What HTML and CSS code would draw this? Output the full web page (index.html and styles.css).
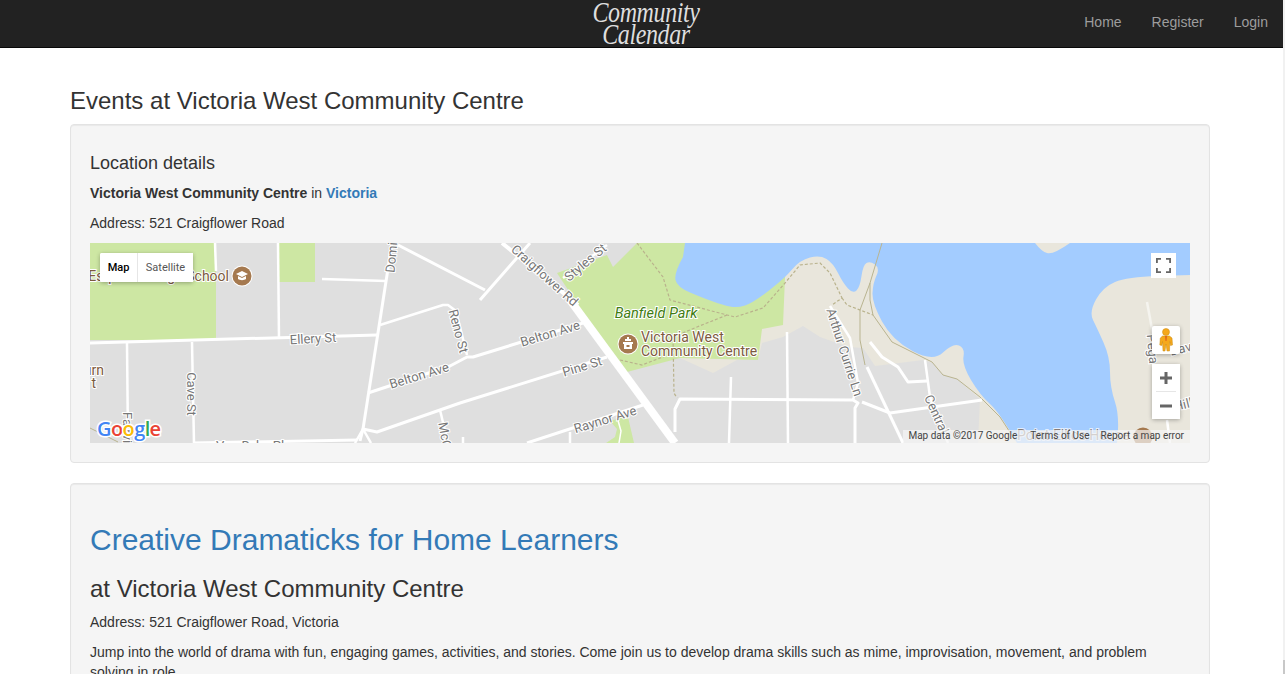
FILE: index.html
```html
<!DOCTYPE html>
<html lang="en">
<head>
  <meta charset="UTF-8" />
  <title>Events at Victoria West Community Centre</title>
  <link rel="stylesheet" href="styles.css">
</head>
<body>
  <div class="page">
    <nav class="navbar">
      <a class="brand" href="#"><span>Community</span><span>Calendar</span></a>
      <ul class="nav-links">
        <li><a href="#">Home</a></li>
        <li><a href="#">Register</a></li>
        <li><a href="#">Login</a></li>
      </ul>
    </nav>

    <main class="content">
      <h3 class="page-title">Events at Victoria West Community Centre</h3>

      <section class="well">
        <h4 class="well-title">Location details</h4>
        <p><strong>Victoria West Community Centre</strong> in <a class="strong-link" href="#">Victoria</a></p>
        <p>Address: 521 Craigflower Road</p>

        <div class="map">
          <svg class="map-canvas" viewBox="0 0 1100 200" width="1100" height="200">
            <rect width="1100" height="200" fill="#dfdfdf" />
            <!-- shore -->
            <polygon fill="#e9e6dc" points="590,115 623,130 647,117 668,117 672,100 693,94 713,83 730,94 758,104 773,105 785,123 833,117 843,120 853,132 867,136 890,156 888,200 1100,200 1100,0 595,0" />
            <!-- parks -->
            <rect width="126" height="97" fill="#cde7a3" />
            <rect x="189" width="36" height="39" fill="#cde7a3" />
            <polygon fill="#cde7a3" points="467,30 517,12 523,24 547,0 600,0 700,0 695,35 693,82 672,86 668,117 590,115 537,129 488,62" />
            <polygon fill="#cde7a3" points="520,178 530,175 538,174 544,200 516,200 525,194 527,186" />
            <!-- water -->
            <path fill="#a3ccff" d="M595 0L593 14Q584 30 585.500 37Q587 44 600 49.500Q613 55 623 58.500Q633 62 640 63.500Q647 65 655 62.500Q663 60 679 47.500Q695 35 702.500 26Q710 17 720 14.500Q730 12 736.500 16Q743 20 748 30Q753 40 758 45.500Q763 51 766.500 47.500Q770 44 771.500 33Q773 22 776.500 20Q780 18 785 21.500Q790 25 786.500 32.500Q783 40 782.500 50Q782 60 792 78.500Q802 97 822.500 108Q843 119 853 109.500Q863 100 869 102.500Q875 105 873.500 113.500Q872 122 881 137Q890 152 900 161Q910 170 927 200L1027 200Q1030 174 1025 159Q1020 144 1020 129Q1020 114 1013.500 99.500Q1007 85 1003 77Q999 69 1006 56.500Q1013 44 1025 39Q1037 34 1068 33L1100 32L1100 0L980 0Q963 12 957 10Q952 9 945 0Z" />

            <!-- trails and rail -->
            <g fill="none" stroke="#b9b28c" stroke-width="1.200" stroke-dasharray="3 2">
              <polyline points="547,0 573,34 580,57 637,72 645,74 673,65 695,40 710,22 730,20 740,30 752,55 742,62" />
              <polyline points="752,55 757,62 783,72" />
              <polyline points="637,72 607,84 583,94 584,150 587,155" />
              <polyline points="530,117 552,122 583,110" />
            </g>
            <g fill="none" stroke="#b9b490" stroke-width="1">
              <polyline points="792,0 780,40 770,67 770,97 775,122" />
              <polyline points="780,40 780,57 783,72 802,99 842,119 853,132 867,136 890,154 910,174 925,197" />
              <polyline points="0,185 14,192 28,199" />
            </g>

            <!-- roads -->
            <g fill="none" stroke="#fff" stroke-width="2.500" stroke-linejoin="round">
              <line x1="0" y1="100" x2="287" y2="92" stroke-width="3" />
              <line x1="125" y1="0" x2="126" y2="28" />
              <line x1="188" y1="0" x2="189" y2="96" />
              <line x1="37" y1="100" x2="38" y2="200" />
              <line x1="102" y1="99" x2="104" y2="200" />
              <line x1="302" y1="0" x2="273" y2="186" stroke-width="3" />
              <line x1="232" y1="36" x2="296" y2="38" />
              <polyline points="290,82 353,62 358,62 366,68 377,112" />
              <polyline points="278,150 360,123 377,114 383,114 493,80" stroke-width="3" />
              <polyline points="270,198 273,186 287,189 370,160 517,114" stroke-width="3" />
              <line x1="103" y1="200" x2="267" y2="197" stroke-width="3" />
              <polyline points="265,200 273,186 281,200" />
              <line x1="350" y1="167" x2="358" y2="200" />
              <line x1="308" y1="2" x2="395" y2="47" stroke-width="3" />
              <line x1="390" y1="57" x2="440" y2="0" stroke-width="3" />
              <line x1="412" y1="0" x2="488" y2="62" stroke-width="4" />
              <line x1="480" y1="57" x2="585" y2="200" stroke-width="8" />
              <line x1="473" y1="35" x2="517" y2="2" />
              <line x1="437" y1="200" x2="553" y2="162" stroke-width="3" />
              <line x1="480" y1="189" x2="480" y2="200" />
              <line x1="373" y1="194" x2="373" y2="200" />
              <polyline points="527,174 531,188 529,200" stroke-width="1.500" />
              <polyline points="585,189 585,166 590,156 763,157 768,160 765,165 765,200" stroke-width="3" />
              <polyline points="772,159 800,170 892,157" stroke-width="3" />
              <polyline points="740,63 760,95 768,140 763,157" />
              <line x1="777" y1="124" x2="813" y2="200" stroke-width="3" />
              <polyline points="780,99 792,114 808,124 818,139 837,138" stroke-width="3" />
              <polyline points="835,117 840,154 858,200" />
              <line x1="697" y1="89" x2="698" y2="200" />
              <line x1="641" y1="134" x2="639" y2="200" />
              <line x1="1057" y1="59" x2="1064" y2="97" stroke="#f5f4ef" />
              <line x1="1077" y1="177" x2="1080" y2="200" />
            </g>

            <!-- street labels -->
            <g class="map-label">
              <text x="223" y="100" transform="rotate(-3 223 95)">Ellery St</text>
              <text x="102" y="156" transform="rotate(90 102 151)">Cave St</text>
              <text x="302" y="7" transform="rotate(-85 302 2)">Dominion</text>
              <text x="369" y="93" transform="rotate(75 369 88)">Reno St</text>
              <text x="329" y="137" transform="rotate(-17 329 132)">Belton Ave</text>
              <text x="460" y="95" transform="rotate(-17 460 90)">Belton Ave</text>
              <text x="492" y="128" transform="rotate(-17 492 123)">Pine St</text>
              <text x="515" y="181" transform="rotate(-17 515 176)">Raynor Ave</text>
              <text x="455" y="37" transform="rotate(42 455 32)">Craigflower Rd</text>
              <text x="495" y="24" transform="rotate(-40 495 19)">Styles St</text>
              <text x="358" y="212" transform="rotate(80 358 207)">McCaskill</text>
              <text x="38" y="198" transform="rotate(90 38 193)">Fairview</text>
              <text x="755" y="114" transform="rotate(72 755 109)">Arthur Currie Ln</text>
              <text x="847" y="176" transform="rotate(66 847 171)">Central</text>
              <text x="160" y="207">Van Dyke Pl</text>
              <text x="1063" y="111" transform="rotate(85 1063 106)">Pega</text>
              <text x="1092" y="110" transform="rotate(-14 1092 105)">Davi</text>
              <text x="1093" y="166" transform="rotate(-14 1093 161)">Hill</text>
            </g>

            <!-- places -->
            <g class="map-place">
              <text x="139" y="38" text-anchor="end">Esquimalt High School</text>
              <text x="14" y="132" text-anchor="end">urn</text>
              <text x="6" y="145" text-anchor="end">t</text>
              <text x="551" y="99">Victoria West</text>
              <text x="551" y="113">Community Centre</text>
              <text x="927" y="197" opacity="0.7">Point Ellice House</text>
            </g>
            <text class="map-park" x="566" y="75" text-anchor="middle">Banfield Park</text>

            <!-- school pin -->
            <circle cx="152" cy="33" r="10.500" fill="#fff" />
            <circle cx="152" cy="33" r="9.500" fill="#a5794f" />
            <polygon points="146,31 152,28 158,31 152,34" fill="#fff" />
            <path d="M148 33v3c2 1.500 6 1.500 8 0v-3l-4 2z" fill="#fff" />
            <!-- community centre pin -->
            <circle cx="538" cy="101" r="10.500" fill="#fff" />
            <circle cx="538" cy="101" r="9.500" fill="#a5794f" />
            <path d="M537 94h2v2h2v2h-6v-2h2zM533 99h10v2h-1v5h-8v-5h-1zM536.500 102v2h3v-2z" fill="#fff" fill-rule="evenodd" />
            <!-- point ellice pin -->
            <circle cx="1053" cy="194" r="9.500" fill="#a5794f" />

            <text class="map-logo" x="7" y="193"><tspan fill="#4285f4">G</tspan><tspan fill="#ea4335">o</tspan><tspan fill="#fbbc05">o</tspan><tspan fill="#4285f4">g</tspan><tspan fill="#34a853">l</tspan><tspan fill="#ea4335">e</tspan></text>
          </svg>

          <div class="map-types">
            <button class="map-type active">Map</button>
            <button class="map-type">Satellite</button>
          </div>

          <button class="map-fullscreen" aria-label="Fullscreen">
            <svg viewBox="0 0 18 18" width="15" height="15">
              <path d="M1 6V1h5M12 1h5v5M17 12v5h-5M6 17H1v-5" fill="none" stroke="#666" stroke-width="2.400" />
            </svg>
          </button>

          <div class="map-peg">
            <svg viewBox="0 0 14 24" width="14" height="24">
              <circle cx="7" cy="4" r="3.500" fill="#f5a81c" stroke="#c98a12" stroke-width="0.500" />
              <path d="M3.500 8h7l2.500 2 .5 7-2 .5-.7-4-.3 9.500H8L7 16l-1 7H4l-.5-9.500-.7 4-2-.5.500-7z" fill="#f5a81c" stroke="#c98a12" stroke-width="0.500" />
              <path d="M6 8h2l-.5 5h-1z" fill="#e0661c" />
            </svg>
          </div>

          <div class="map-zoom">
            <button class="zoom-btn">
              <svg viewBox="0 0 12 12" width="12" height="12"><path d="M0 6h12M6 0v12" stroke="#666" stroke-width="3" /></svg>
            </button>
            <div class="zoom-sep"></div>
            <button class="zoom-btn">
              <svg viewBox="0 0 12 12" width="12" height="12"><path d="M0 6h12" stroke="#666" stroke-width="3" /></svg>
            </button>
          </div>

          <div class="map-attrib">
            <span>Map data ©2017 Google</span>
            <span class="attrib-terms">Terms of Use</span>
            <span>Report a map error</span>
          </div>
        </div>
      </section>

      <section class="well">
        <h2><a href="#">Creative Dramaticks for Home Learners</a></h2>
        <h3 class="event-venue">at Victoria West Community Centre</h3>
        <p>Address: 521 Craigflower Road, Victoria</p>
        <p>Jump into the world of drama with fun, engaging games, activities, and stories. Come join us to develop drama skills such as mime, improvisation, movement, and problem solving in role.</p>
      </section>
    </main>
  </div>

  <div class="scrollbar"><div class="scrollbar-thumb"></div></div>
</body>
</html>
```

FILE: styles.css
```css
html, body {
  height: 674px;
  overflow: hidden;
}
body {
  display: flex;
  margin: 0;
  font-family: "Liberation Sans", Arial, sans-serif;
  font-size: 14px;
  line-height: 20px;
  color: #333;
  background: #fff;
}
a {
  color: #337ab7;
  text-decoration: none;
}
h2, h3, h4 {
  font-weight: 500;
  line-height: 1.1;
  margin: 0 0 10px;
}
h2 {
  font-size: 30px;
  margin-top: 20px;
}
h3 {
  font-size: 24px;
  margin-top: 20px;
}
h4 {
  font-size: 18px;
  margin-top: 10px;
}
p {
  margin: 0 0 10px;
}
.page {
  width: 1283px;
  flex: none;
}
.scrollbar {
  width: 2px;
  flex: none;
  display: flex;
  align-items: flex-end;
  background: #f1f1f1;
}
.scrollbar-thumb {
  width: 100%;
  height: 14px;
  background: #c8c8c8;
}

/* top bar */
.navbar {
  display: flex;
  align-items: flex-start;
  height: 47px;
  padding: 0 15px 0 592px;
  background: #222;
  border-bottom: 1px solid #080808;
  overflow: hidden;
}
.brand {
  display: flex;
  flex-direction: column;
  align-items: center;
  width: 108px;
  margin-top: 1px;
  font-family: "Liberation Serif", serif;
  font-style: italic;
  font-size: 24px;
  line-height: 18px;
  letter-spacing: -0.4px;
  color: #dedede;
  transform: scaleY(1.22);
  transform-origin: top center;
}
.nav-links {
  display: flex;
  gap: 30px;
  margin: 12px 0 0 auto;
  padding: 0;
  list-style: none;
}
.nav-links a {
  color: #9d9d9d;
}

.content {
  padding: 0 73px 0 70px;
}
.page-title {
  margin: 40px 0 9.6px;
}
.well-title {
  margin-bottom: 9.4px;
}
.event-venue {
  margin-bottom: 9.6px;
}
.well {
  padding: 19px;
  margin-bottom: 20px;
  background: #f5f5f5;
  border: 1px solid #e3e3e3;
  border-radius: 4px;
  box-shadow: inset 0 1px 1px rgba(0, 0, 0, 0.05);
}
.strong-link {
  font-weight: 700;
}

/* map */
.map {
  position: relative;
  height: 200px;
  overflow: hidden;
  font-family: Roboto, sans-serif;
}
.map-canvas {
  display: block;
}
.map-label text {
  font: 13px Roboto, sans-serif;
  fill: #777;
  stroke: #fff;
  stroke-width: 2px;
  paint-order: stroke;
  text-anchor: middle;
}
.map-place text {
  font: 14px Roboto, sans-serif;
  fill: #7c5a3e;
  stroke: #fff;
  stroke-width: 2px;
  paint-order: stroke;
}
.map-park {
  font: italic 14.5px Roboto, sans-serif;
  fill: #3f7d12;
  stroke: #fff;
  stroke-width: 2px;
  paint-order: stroke;
}
.map-logo {
  font: 600 20px "Open Sans", sans-serif;
  letter-spacing: -0.6px;
  stroke: #fff;
  stroke-width: 3px;
  paint-order: stroke;
}
.map button {
  padding: 0;
  border: 0;
  background: #fff;
  font-family: inherit;
}
.map-types {
  position: absolute;
  top: 10px;
  left: 10px;
  display: flex;
  height: 29px;
  background: #fff;
  border-radius: 2px;
  box-shadow: 0 1px 4px rgba(0, 0, 0, 0.3);
}
.map-type {
  font-size: 11px;
  color: #565656;
  width: 55px;
}
.map .map-type.active {
  width: 38px;
  font-weight: 500;
  color: #000;
  border-right: 1px solid #e6e6e6;
  border-radius: 2px 0 0 2px;
}
.map-fullscreen {
  position: absolute;
  top: 10px;
  right: 14px;
  width: 25px;
  height: 25px;
  display: flex;
  align-items: center;
  justify-content: center;
}
.map-peg {
  position: absolute;
  top: 83px;
  right: 10px;
  width: 28px;
  height: 28px;
  display: flex;
  align-items: center;
  justify-content: center;
  background: #fff;
  border-radius: 2px;
  box-shadow: 0 1px 4px rgba(0, 0, 0, 0.3);
}
.map-zoom {
  position: absolute;
  top: 121px;
  right: 10px;
  width: 28px;
  height: 55px;
  background: #fff;
  border-radius: 2px;
  box-shadow: 0 1px 4px rgba(0, 0, 0, 0.3);
}
.zoom-btn {
  display: flex;
  align-items: center;
  justify-content: center;
  width: 28px;
  height: 27px;
}
.zoom-sep {
  height: 1px;
  margin: 0 4px;
  background: #e6e6e6;
}
.map-attrib {
  position: absolute;
  right: 0;
  bottom: 0;
  display: flex;
  height: 13px;
  padding: 0 6px 0 5px;
  font-size: 10px;
  line-height: 11px;
  color: #444;
  background: rgba(245, 245, 245, 0.7);
}
.attrib-terms {
  margin: 0 11px 0 13px;
}
```
